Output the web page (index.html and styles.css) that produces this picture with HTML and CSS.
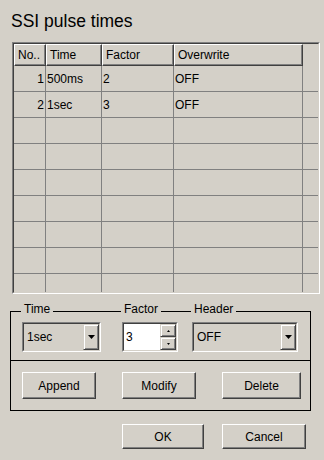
FILE: index.html
```html
<!DOCTYPE html>
<html lang="en">
<head>
    <meta charset="UTF-8">
    <meta name="viewport" content="width=device-width, initial-scale=1.0">
    <title>SSI pulse times</title>
    <link rel="stylesheet" href="styles.css">
</head>
<body>
    <div class="dialog">
        <h1 class="dialog-title">SSI pulse times</h1>

        <!-- pulse time list -->
        <div class="list-frame">
            <div class="list-inner">
                <div class="list-row list-head">
                    <div class="head-cell">No..</div>
                    <div class="head-cell">Time</div>
                    <div class="head-cell">Factor</div>
                    <div class="head-cell">Overwrite</div>
                    <div class="head-fill"></div>
                </div>
                <div class="list-row">
                    <div class="cell num">1</div>
                    <div class="cell">500ms</div>
                    <div class="cell">2</div>
                    <div class="cell">OFF</div>
                    <div class="cell fill"></div>
                </div>
                <div class="list-row">
                    <div class="cell num">2</div>
                    <div class="cell">1sec</div>
                    <div class="cell">3</div>
                    <div class="cell">OFF</div>
                    <div class="cell fill"></div>
                </div>
                <div class="list-row"><div class="cell"></div><div class="cell"></div><div class="cell"></div><div class="cell"></div><div class="cell fill"></div></div>
                <div class="list-row"><div class="cell"></div><div class="cell"></div><div class="cell"></div><div class="cell"></div><div class="cell fill"></div></div>
                <div class="list-row"><div class="cell"></div><div class="cell"></div><div class="cell"></div><div class="cell"></div><div class="cell fill"></div></div>
                <div class="list-row"><div class="cell"></div><div class="cell"></div><div class="cell"></div><div class="cell"></div><div class="cell fill"></div></div>
                <div class="list-row"><div class="cell"></div><div class="cell"></div><div class="cell"></div><div class="cell"></div><div class="cell fill"></div></div>
                <div class="list-row"><div class="cell"></div><div class="cell"></div><div class="cell"></div><div class="cell"></div><div class="cell fill"></div></div>
                <div class="list-row"><div class="cell"></div><div class="cell"></div><div class="cell"></div><div class="cell"></div><div class="cell fill"></div></div>
            </div>
        </div>

        <!-- edit group -->
        <div class="group">
            <div class="group-legends">
                <span class="legend">Time</span>
                <span class="legend">Factor</span>
                <span class="legend">Header</span>
            </div>
            <div class="group-controls">
                <div class="combo combo-time">
                    <div class="combo-inner">
                        <span class="combo-value">1sec</span>
                        <span class="combo-btn">
                            <svg width="7" height="4" viewBox="0 0 7 4"><polygon points="0,0 7,0 3.5,4" fill="#000"/></svg>
                        </span>
                    </div>
                </div>
                <div class="spin">
                    <div class="spin-inner">
                        <span class="spin-value">3</span>
                        <span class="spin-btns">
                            <span class="spin-btn">
                                <svg width="3" height="2" viewBox="0 0 3 2"><polygon points="1.5,0 3,2 0,2" fill="#000"/></svg>
                            </span>
                            <span class="spin-btn">
                                <svg width="3" height="2" viewBox="0 0 3 2"><polygon points="0,0 3,0 1.5,2" fill="#000"/></svg>
                            </span>
                        </span>
                    </div>
                </div>
                <div class="combo combo-header">
                    <div class="combo-inner">
                        <span class="combo-value">OFF</span>
                        <span class="combo-btn">
                            <svg width="7" height="4" viewBox="0 0 7 4"><polygon points="0,0 7,0 3.5,4" fill="#000"/></svg>
                        </span>
                    </div>
                </div>
            </div>
            <div class="group-buttons">
                <button class="btn btn-append">Append</button>
                <button class="btn btn-modify">Modify</button>
                <button class="btn btn-delete">Delete</button>
            </div>
        </div>

        <div class="dialog-footer">
            <button class="btn btn-ok">OK</button>
            <button class="btn btn-cancel">Cancel</button>
        </div>
    </div>
</body>
</html>
```

FILE: styles.css
```css
:root {
    --face: #d4d0c8;
    --light: #ffffff;
    --shadow: #808080;
    --dark: #404040;
    --text: #000000;
}

* {
    box-sizing: border-box;
    margin: 0;
    padding: 0;
}

body {
    background-color: var(--face);
    color: var(--text);
    font-family: "Liberation Sans", Arial, sans-serif;
    font-size: 12px;
}

.dialog {
    width: 324px;
    height: 460px;
    padding-top: 11px;
}

.dialog-title {
    margin-left: 11px;
    font-size: 17.5px;
    font-weight: normal;
    line-height: 20px;
}

/* sunken list */
.list-frame {
    width: 308px;
    height: 252px;
    margin: 11px 0 0 12px;
    border: 1px solid;
    border-color: var(--shadow) var(--light) var(--light) var(--shadow);
}

.list-inner {
    height: 100%;
    border: 1px solid;
    border-color: var(--dark) var(--face) var(--face) var(--dark);
    overflow: hidden;
}

.list-row {
    display: grid;
    grid-template-columns: 32px 56px 72px 129px 1fr;
}

.head-cell {
    height: 22px;
    padding: 0 3px;
    line-height: 20px;
    white-space: nowrap;
    border: 1px solid;
    border-color: var(--light) var(--dark) var(--dark) var(--light);
    box-shadow: inset -1px -1px var(--shadow);
}

.cell {
    height: 26px;
    padding: 1px 1px 0;
    line-height: 24px;
    border-right: 1px solid var(--shadow);
    border-bottom: 1px solid var(--shadow);
}

.cell.num {
    text-align: right;
}

.cell.fill {
    border-right: none;
}

/* group box */
.group {
    width: 301px;
    margin: 17px 0 0 10px;
    border: 1px solid #000;
}

.group-legends,
.group-controls {
    display: grid;
    grid-template-columns: 100px 70px 1fr;
    padding-left: 11px;
}

.group-legends {
    margin-top: -10px;
    height: 14px;
    line-height: 14px;
}

.legend {
    justify-self: start;
    margin-left: -1px;
    padding: 0 3px;
    background-color: var(--face);
}

.group-controls {
    padding-top: 6px;
    padding-bottom: 8px;
}

.combo,
.spin {
    display: flex;
    height: 30px;
    border: 1px solid;
    border-color: var(--shadow) var(--light) var(--light) var(--shadow);
}

.combo-time {
    width: 79px;
}

.combo-header {
    width: 106px;
}

.combo-inner,
.spin-inner {
    flex: 1;
    display: flex;
    border: 1px solid;
    border-color: var(--dark) var(--face) var(--face) var(--dark);
}

.combo-value,
.spin-value {
    flex: 1;
    display: flex;
    align-items: center;
    padding-left: 3px;
}

.combo-btn,
.spin-btn {
    display: flex;
    align-items: center;
    justify-content: center;
    border: 1px solid;
    border-color: var(--face) var(--dark) var(--dark) var(--face);
    box-shadow: inset 1px 1px var(--light), inset -1px -1px var(--shadow);
}

.combo-btn {
    width: 16px;
}

.spin {
    width: 56px;
}

.spin-value {
    background-color: #fff;
    padding-left: 2px;
}

.spin-btns {
    width: 16px;
    display: flex;
    flex-direction: column;
}

.spin-btn {
    flex: 1;
}

.group-buttons {
    display: grid;
    grid-template-columns: 100px 100px 1fr;
    padding: 11px 0 11px 11px;
    border-top: 1px solid #000;
}

.btn {
    height: 27px;
    background-color: var(--face);
    color: var(--text);
    font-family: inherit;
    font-size: 12px;
    border: 1px solid;
    border-color: var(--light) var(--dark) var(--dark) var(--light);
    box-shadow: inset -1px -1px var(--shadow);
}

.btn-append,
.btn-modify {
    width: 74px;
}

.btn-delete {
    width: 79px;
}

.dialog-footer {
    display: flex;
    gap: 18px;
    margin-top: 13px;
    padding-left: 122px;
}

.btn-ok {
    width: 82px;
    height: 25px;
}

.btn-cancel {
    width: 84px;
    height: 25px;
}
```
